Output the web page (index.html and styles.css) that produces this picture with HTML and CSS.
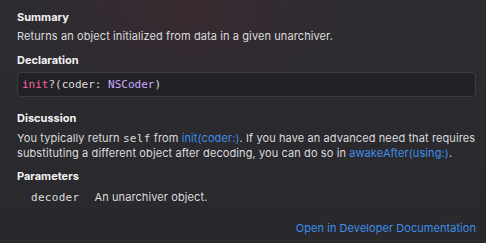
FILE: index.html
```html
<!DOCTYPE html>
<html>
<head>
<meta charset="utf-8">
<link rel="stylesheet" href="styles.css">
</head>
<body>
<div class="panel">
  <section class="sec sec-summary">
    <h2 class="head">Summary</h2>
    <p class="text">Returns an object initialized from data in a given unarchiver.</p>
  </section>
  <section class="sec sec-decl">
    <h2 class="head">Declaration</h2>
    <div class="code"><span class="kw">init</span>?(coder: <span class="ty">NSCoder</span>)</div>
  </section>
  <section class="sec sec-disc">
    <h2 class="head">Discussion</h2>
    <p class="text">You typically return <code class="mono">self</code> from <a class="link">init(coder:)</a>. If you have an advanced need that requires substituting a different object after decoding, you can do so in <a class="link">awakeAfter(using:)</a>.</p>
  </section>
  <section class="sec sec-params">
    <h2 class="head">Parameters</h2>
    <div class="param"><code class="mono pname">decoder</code><span class="text">An unarchiver object.</span></div>
  </section>
  <div class="footer"><a class="link">Open in Developer Documentation</a></div>
</div>
</body>
</html>
```
FILE: styles.css
```css
html, body {
  margin: 0;
  padding: 0;
  width: 486px;
  height: 243px;
  overflow: hidden;
}
body {
  background:
    radial-gradient(ellipse 170px 90px at 190px 10px, rgba(72, 40, 50, 0.45), rgba(72, 40, 50, 0) 100%),
    linear-gradient(180deg, #2d2c31 0%, #2a2a2f 50%, #28282d 100%);
  font-family: Inter, "Noto Sans", sans-serif;
  color: #dedede;
  -webkit-font-smoothing: antialiased;
}
.panel {
  display: flex;
  flex-direction: column;
  padding: 10px 2px 0 17px;
  height: 243px;
  box-sizing: border-box;
}
.head {
  margin: 0;
  font-size: 11px;
  font-weight: 700;
  line-height: 14px;
  color: #f2f2f2;
}
.text {
  margin: 0;
  font-size: 11px;
  line-height: 15px;
  letter-spacing: 0.1px;
  color: #dcdcdc;
}
.sec-summary .text { margin-top: 5px; }
.sec-decl { margin-top: 9px; }
.code {
  margin: 5px 8px 0 0;
  height: 25px;
  box-sizing: border-box;
  border: 1px solid #3c3c41;
  border-radius: 4px;
  background: #222226;
  padding: 0 0 0 4px;
  font-family: "DejaVu Sans Mono", "Liberation Mono", monospace;
  font-size: 11px;
  line-height: 23px;
  color: #dcdcdc;
}
.kw { color: #fc5fa3; }
.ty { color: #d0a8ff; }
.sec-disc { margin-top: 14px; }
.sec-disc .text { margin-top: 6px; }
.mono {
  font-family: "DejaVu Sans Mono", "Liberation Mono", monospace;
  font-size: 11px;
  line-height: 1;
  letter-spacing: 0.3px;
}
.link { color: #3e8fe8; text-decoration: none; }
.sec-params { margin-top: 8px; }
.param {
  display: flex;
  align-items: baseline;
  gap: 15px;
  margin-top: 7px;
  padding-left: 14px;
  line-height: 15px;
}
.pname { color: #dcdcdc; }
.footer {
  margin-top: auto;
  display: flex;
  justify-content: flex-end;
  padding: 0 8px 7px 0;
  font-size: 11px;
  line-height: 15px;
  letter-spacing: 0.05px;
}
```
